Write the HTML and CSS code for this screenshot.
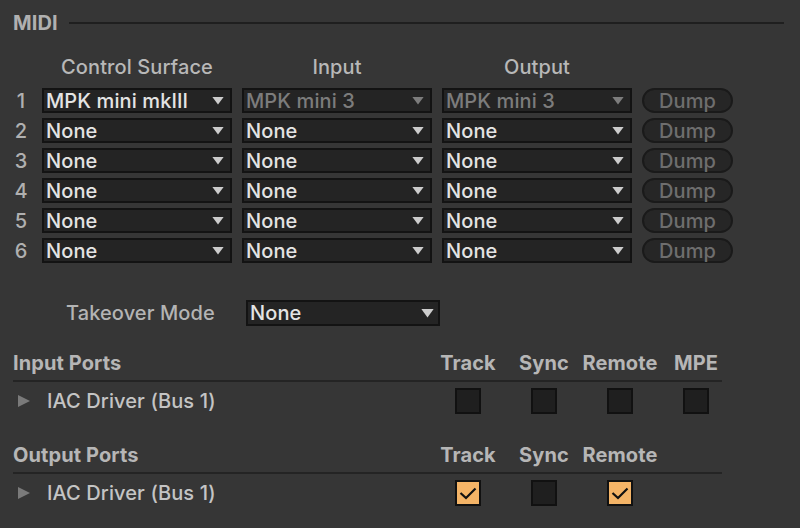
FILE: index.html
```html
<!DOCTYPE html>
<html>
<head>
<meta charset="utf-8">
<link rel="stylesheet" href="styles.css">
</head>
<body>
<div class="page">
  <div class="title-row">
    <span class="title">MIDI</span>
    <span class="rule"></span>
  </div>

  <div class="cs-grid">
    <span></span>
    <span class="col-head">Control Surface</span>
    <span class="col-head">Input</span>
    <span class="col-head">Output</span>
    <span></span>
  </div>

  <div class="cs-grid rows">
    <span class="num">1</span>
    <div class="dd"><span class="dd-text">MPK mini mkIII</span><span class="arrow"></span></div>
    <div class="dd disabled"><span class="dd-text">MPK mini 3</span><span class="arrow"></span></div>
    <div class="dd disabled"><span class="dd-text">MPK mini 3</span><span class="arrow"></span></div>
    <div class="dump">Dump</div>

    <span class="num">2</span>
    <div class="dd"><span class="dd-text">None</span><span class="arrow"></span></div>
    <div class="dd"><span class="dd-text">None</span><span class="arrow"></span></div>
    <div class="dd"><span class="dd-text">None</span><span class="arrow"></span></div>
    <div class="dump">Dump</div>

    <span class="num">3</span>
    <div class="dd"><span class="dd-text">None</span><span class="arrow"></span></div>
    <div class="dd"><span class="dd-text">None</span><span class="arrow"></span></div>
    <div class="dd"><span class="dd-text">None</span><span class="arrow"></span></div>
    <div class="dump">Dump</div>

    <span class="num">4</span>
    <div class="dd"><span class="dd-text">None</span><span class="arrow"></span></div>
    <div class="dd"><span class="dd-text">None</span><span class="arrow"></span></div>
    <div class="dd"><span class="dd-text">None</span><span class="arrow"></span></div>
    <div class="dump">Dump</div>

    <span class="num">5</span>
    <div class="dd"><span class="dd-text">None</span><span class="arrow"></span></div>
    <div class="dd"><span class="dd-text">None</span><span class="arrow"></span></div>
    <div class="dd"><span class="dd-text">None</span><span class="arrow"></span></div>
    <div class="dump">Dump</div>

    <span class="num">6</span>
    <div class="dd"><span class="dd-text">None</span><span class="arrow"></span></div>
    <div class="dd"><span class="dd-text">None</span><span class="arrow"></span></div>
    <div class="dd"><span class="dd-text">None</span><span class="arrow"></span></div>
    <div class="dump">Dump</div>
  </div>

  <div class="takeover">
    <span class="takeover-label">Takeover Mode</span>
    <div class="dd dd-wide"><span class="dd-text">None</span><span class="arrow"></span></div>
  </div>

  <div class="ports first">
    <div class="ports-head">
      <span class="ports-title">Input Ports</span>
      <span class="ph">Track</span>
      <span class="ph">Sync</span>
      <span class="ph">Remote</span>
      <span class="ph">MPE</span>
    </div>
    <div class="port-row">
      <span class="port-name"><span class="expander"></span>IAC Driver (Bus 1)</span>
      <span class="cell"><span class="cb"></span></span>
      <span class="cell"><span class="cb"></span></span>
      <span class="cell"><span class="cb"></span></span>
      <span class="cell"><span class="cb"></span></span>
    </div>
  </div>

  <div class="ports second">
    <div class="ports-head">
      <span class="ports-title">Output Ports</span>
      <span class="ph">Track</span>
      <span class="ph">Sync</span>
      <span class="ph">Remote</span>
      <span class="ph"></span>
    </div>
    <div class="port-row">
      <span class="port-name"><span class="expander"></span>IAC Driver (Bus 1)</span>
      <span class="cell"><span class="cb on"><svg viewBox="0 0 22 22" width="22" height="22"><polyline points="3.5,11 9,16 18.5,6.5" fill="none" stroke="#111" stroke-width="2.2"/></svg></span></span>
      <span class="cell"><span class="cb"></span></span>
      <span class="cell"><span class="cb on"><svg viewBox="0 0 22 22" width="22" height="22"><polyline points="3.5,11 9,16 18.5,6.5" fill="none" stroke="#111" stroke-width="2.2"/></svg></span></span>
      <span class="cell"></span>
    </div>
  </div>
</div>
</body>
</html>
```

FILE: styles.css
```css
html, body {
  margin: 0;
  padding: 0;
  background: #363636;
}

body {
  font-family: "Inter", "Liberation Sans", sans-serif;
  font-size: 20px;
  font-weight: 500;
  letter-spacing: 0.1px;
  line-height: 24px;
  color: #b4b4b4;
  width: 800px;
  height: 528px;
  overflow: hidden;
}

.page {
  padding-top: 11px;
}

.title-row {
  display: flex;
  align-items: center;
  margin-left: 13px;
  margin-right: 16px;
  height: 24px;
}

.title {
  font-weight: 700;
  color: #b0b0b0;
}

.rule {
  flex: 1;
  height: 2px;
  background: #1f1f1f;
  margin-left: 11px;
}

.cs-grid {
  display: grid;
  grid-template-columns: 22px 190px 190px 190px 91px;
  column-gap: 10px;
  margin-left: 10px;
  margin-top: 20px;
}

.cs-grid.rows {
  margin-top: 9px;
  row-gap: 5px;
  grid-auto-rows: 25px;
}

.col-head {
  text-align: center;
  color: #b8b8b8;
  white-space: nowrap;
}

.num {
  text-align: center;
  align-self: center;
  color: #b0b0b0;
}

.dd {
  display: flex;
  align-items: center;
  box-sizing: border-box;
  height: 25px;
  background: #242424;
  border: 2px solid #131313;
  padding: 0 6px 0 2px;
  color: #e4e4e4;
}

.dd-text {
  flex: 1;
  line-height: 21px;
  white-space: nowrap;
  padding-top: 1px;
}

.arrow {
  width: 12px;
  height: 8px;
  background: #cdcdcd;
  clip-path: polygon(0 0, 100% 0, 50% 100%);
}

.dd.disabled {
  color: #7c7c7c;
}

.dd.disabled .arrow {
  background: #7c7c7c;
}

.dump {
  box-sizing: border-box;
  height: 25px;
  border: 2px solid #1a1a1a;
  background: #262626;
  border-radius: 13px;
  color: #6e6e6e;
  text-align: center;
  line-height: 21px;
  padding-top: 1px;
}

.takeover {
  display: flex;
  align-items: center;
  margin-top: 37px;
  height: 26px;
}

.takeover-label {
  margin-left: 66px;
  width: 180px;
  color: #b4b4b4;
}

.dd-wide {
  width: 194px;
  height: 26px;
  padding-right: 4px;
}

.dd-wide .arrow {
  width: 13px;
  height: 9px;
}

.ports {
  margin-left: 13px;
  width: 709px;
}

.ports.first {
  margin-top: 25px;
}

.ports.second {
  margin-top: 29px;
}

.ports-head,
.port-row {
  display: grid;
  grid-template-columns: 1fr 52px 52px 52px 52px;
  column-gap: 24px;
  align-items: center;
}

.ports-head {
  font-weight: 700;
  color: #b6b6b6;
  padding-bottom: 5px;
  border-bottom: 2px solid #242424;
}

.ph {
  display: flex;
  justify-content: center;
  white-space: nowrap;
}

.port-row {
  margin-top: 6px;
  height: 26px;
}

.port-name {
  display: flex;
  align-items: center;
  color: #c4c4c4;
  white-space: nowrap;
}

.expander {
  width: 12px;
  height: 12px;
  background: #7a7a7a;
  clip-path: polygon(0 0, 100% 50%, 0 100%);
  margin-left: 5px;
  margin-right: 17px;
}

.cell {
  display: flex;
  justify-content: center;
}

.cb {
  box-sizing: border-box;
  width: 26px;
  height: 26px;
  background: #1f1f1f;
  border: 2px solid #111111;
  display: block;
}

.cb.on {
  background: #f4b467;
}

.cb svg {
  display: block;
}
```
